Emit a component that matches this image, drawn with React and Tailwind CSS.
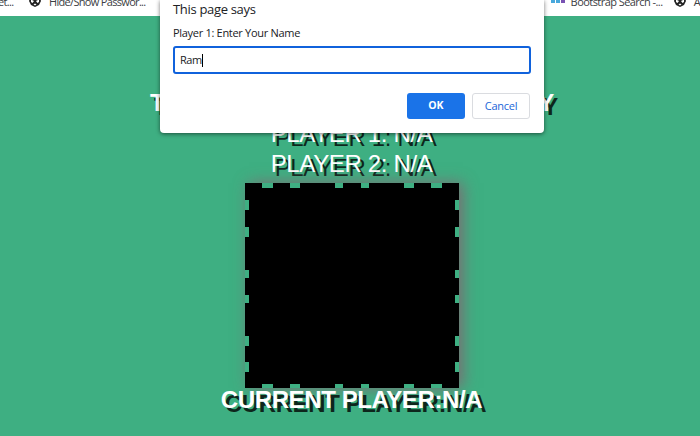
const segments = [
  [17.5, 10.5], [17, 10.5], [34.5, 8], [18, 8.5], [34.5, 10.5], [17, 10.5],
];
const rows = [
  [12, 10.5], [17, 10], [32.5, 8.5], [16.5, 8], [33, 10], [16, 10.5],
];

function HorizontalEdge() {
  return (
    <div className="flex h-[4.5px] shrink-0">
      {segments.map(([gap, w], i) => (
        <div key={i} className="shrink-0 bg-[#3eaf82]" style={{ marginLeft: gap, width: w }} />
      ))}
    </div>
  );
}

function VerticalEdge() {
  return (
    <div className="w-[4.5px]">
      {rows.map(([gap, h], i) => (
        <div key={i} className="flow-root">
          <div className="bg-[#3eaf82]" style={{ marginTop: gap, height: h }} />
        </div>
      ))}
    </div>
  );
}

function GlobeIcon({ className }) {
  return (
    <svg viewBox="0 0 12 12" className={className}>
      <path d="M2 0h8l2 6-2 4-4 2-4-2-2-4z" fill="#222" />
      <path d="M2 4.5l3 1.5-1.5 2L2 7zM10 4.5L7 6l1.500 2L10 7zM4.500 9.500L6 8.500l1.500 1L6 10.500zM4 3l2-1 2 1-2 1.200z" fill="#fff" />
    </svg>
  );
}

function Dialog() {
  return (
    <div className="absolute left-[159.5px] top-0 h-[133px] w-[384.5px] rounded-b-[4px] bg-white px-[13px] font-['Open_Sans',sans-serif] text-[#202124] shadow-[0_1px_4px_rgba(0,0,0,0.55)]">
      <div className="ml-[0.5px] h-[18px] text-[13px] leading-[19px] tracking-[-0.32px] whitespace-nowrap">This page says</div>
      <div className="ml-[0.5px] mt-[7px] h-[16px] text-[11px] leading-[16px] tracking-[-0.3px] whitespace-nowrap">Player 1: Enter Your Name</div>
      <div className="mt-[5px] flex h-[28px] w-[358px] items-center rounded-[3px] border-2 border-[#1062dc] pl-[5.5px] text-[11px] tracking-[-0.5px]">
        <span className="leading-[14px]">Ram</span>
        <span className="h-[13px] w-px bg-black" />
      </div>
      <div className="mt-[19px] flex justify-end gap-[7px] pr-[1px] text-[11px] tracking-[-0.25px]">
        <div className="flex h-[26px] w-[58.5px] items-center justify-center rounded-[3px] bg-[#1a73e8] text-[10.5px] font-bold text-white">OK</div>
        <div className="flex h-[26px] w-[58px] items-center justify-center rounded-[3px] border border-[#dadce0] font-medium text-[#1a66d8]">Cancel</div>
      </div>
    </div>
  );
}

export default function App() {
  return (
    <div className="relative h-[436px] w-[700px] overflow-hidden bg-[#3eaf82]">
      <div className="flex h-[16px] justify-between overflow-hidden bg-white font-['Open_Sans',sans-serif] text-[11px] leading-[14px] tracking-[-0.68px] whitespace-nowrap text-[#3c4043]">
        <div className="-mt-[5px] flex">
          <span className="w-[31px] -ml-[2px]">et...</span>
          <GlobeIcon className="h-3 w-3" />
          <span className="ml-[8px]">Hide/Show Passwor...</span>
        </div>
        <div className="-mt-[5px] flex w-[149px]">
          <span className="mt-[3px] h-[5px] w-[4px] bg-[#48a8dc]" />
          <span className="ml-px mt-[3px] h-[5px] w-[4px] bg-[#48a8dc]" />
          <span className="ml-px mt-[3px] h-[5px] w-[4px] bg-[#7952b3]" />
          <span className="ml-[6px] w-[107px] tracking-[-0.55px]">Bootstrap Search -...</span>
          <GlobeIcon className="h-3 w-3 shrink-0" />
          <span className="ml-[8px]">A</span>
        </div>
      </div>
      <div className="flex flex-col items-center pt-[73px] font-['Liberation_Sans',Arial,sans-serif] text-[24px] leading-[28px] tracking-[-0.35px] text-white [text-shadow:4px_4px_0_rgba(0,0,0,0.78)]">
        <div className="ml-[4px] flex h-[31px] w-[404px] justify-between font-bold"><span>T</span><span>Y</span></div>
        <div className="ml-[3px] h-[30px] whitespace-nowrap">PLAYER 1: N/A</div>
        <div className="ml-[3px] h-[33px] whitespace-nowrap">PLAYER 2: N/A</div>
        <div className="ml-[3.5px] flex h-[205px] w-[214.5px] flex-col bg-black shadow-[4px_0_14px_rgba(145,85,110,0.75)]">
          <HorizontalEdge />
          <div className="flex flex-1 justify-between">
            <VerticalEdge />
            <VerticalEdge />
          </div>
          <HorizontalEdge />
        </div>
        <div className="relative ml-[3px] -mt-[2px] font-bold tracking-[-0.4px] whitespace-nowrap">CURRENT PLAYER:N/A</div>
      </div>
      <Dialog />
    </div>
  );
}
